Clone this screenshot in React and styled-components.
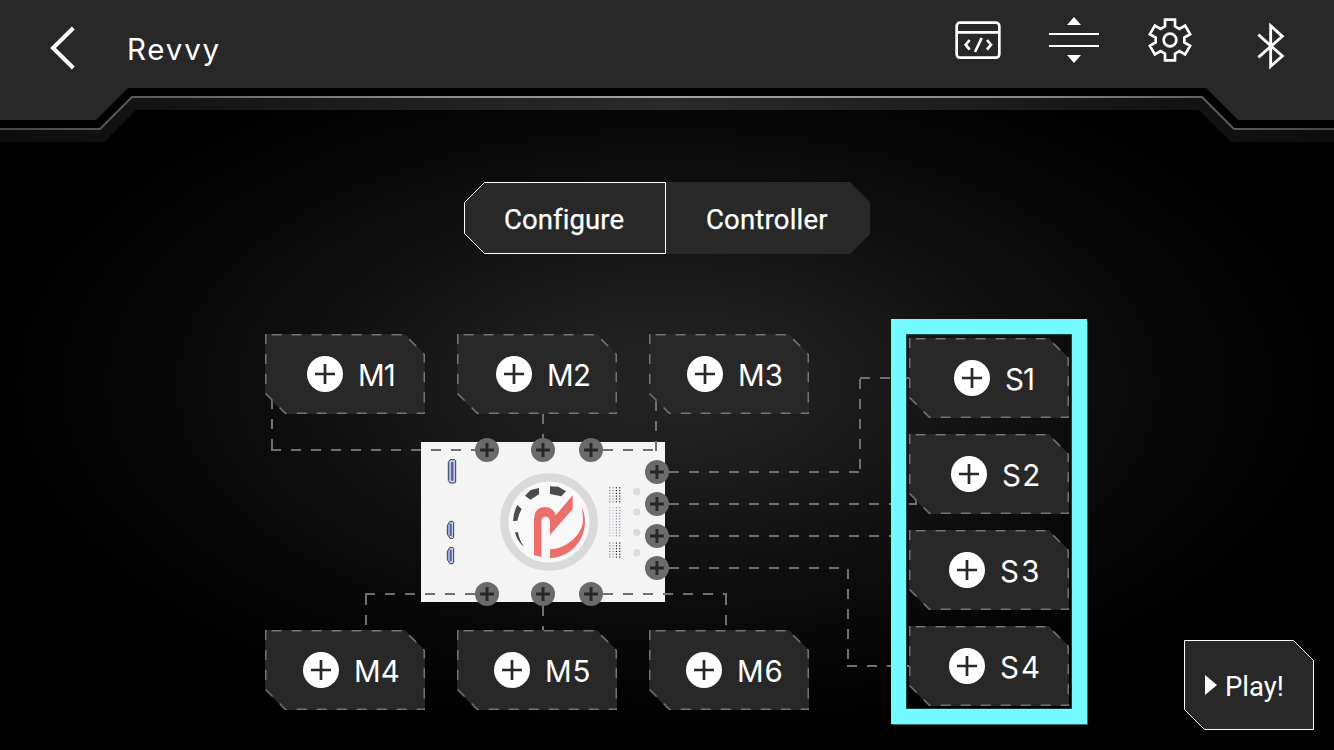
import React from "react";
import styled, { createGlobalStyle } from "styled-components";

const GlobalStyle = createGlobalStyle`
  * { box-sizing: border-box; }
  body { margin: 0; background: #000; }
`;

const Page = styled.div`
  display: flex;
  flex-direction: column;
  width: 1334px;
  height: 750px;
  overflow: hidden;
  color: #fff;
  font-family: Roboto, "Liberation Sans", sans-serif;
  background: radial-gradient(ellipse 680px 355px at 667px 385px, #252525 0%, #1e1e1e 20%, #101010 52%, #060606 78%, #000 100%);
`;

const Header = styled.header`
  position: relative;
  flex: none;
  display: flex;
  align-items: flex-start;
  height: 142px;
`;

const HeaderShape = styled.svg`
  position: absolute;
  inset: 0;
`;

const BackButton = styled.button`
  position: relative;
  width: 127px;
  height: 96px;
  padding: 0;
  border: 0;
  background: none;
`;

const Title = styled.h1`
  position: relative;
  margin: 0;
  font: 400 29.5px/98px Inter, sans-serif;
  letter-spacing: 1.8px;
`;

const Tools = styled.nav`
  position: relative;
  display: flex;
  margin-left: auto;
  padding-right: 20px;
`;

const ToolIcon = styled.svg`
  display: block;
  width: 96px;
  height: 88px;
  fill: none;
  stroke: #fff;
  stroke-width: 8;
`;

const Tabs = styled.div`
  flex: none;
  display: flex;
  align-self: center;
  width: 406px;
  height: 72px;
  margin-top: 40px;
`;

const Tab = styled.button`
  position: relative;
  width: ${(p) => p.$width}px;
  padding: 0 0 0 ${(p) => p.$inset}px;
  border: 0;
  background: none;
  color: #fff;
  text-align: left;
  font: 400 27.5px/76px Roboto, sans-serif;
  letter-spacing: ${(p) => p.$spacing}px;
  -webkit-text-stroke: 0.25px #fff;
`;

const Outline = styled.svg`
  position: absolute;
  inset: 0;
  fill: #282828;
`;

const Front = styled.span`
  position: relative;
`;

const Workspace = styled.main`
  position: relative;
  flex: 1;
  display: flex;
  align-items: flex-start;
  padding: 80px 20px 20px 265px;
`;

const Motors = styled.section`
  display: flex;
  flex-direction: column;
  gap: 28px;
  width: 544px;
`;

const MotorRow = styled.div`
  display: flex;
  gap: 32px;
`;

const Sensors = styled.section`
  position: relative;
  display: flex;
  flex-direction: column;
  gap: 16px;
  margin: 4px 0 0 100px;
`;

const BoardArt = styled.svg`
  display: block;
  width: 244px;
  height: 160px;
  margin-left: 156px;
`;

const Wires = styled.svg`
  position: absolute;
  inset: 0;
  z-index: 1;
`;

const Slot = styled.button`
  position: relative;
  z-index: 2;
  display: flex;
  align-items: center;
  justify-content: center;
  gap: 16px;
  width: 160px;
  height: 80px;
  padding: 0 0 0 12px;
  border: 0;
  background: none;
  color: #fff;
`;

const SlotOutline = styled(Outline)`
  clip-path: polygon(0 0, 140px 0, 160px 20px, 160px 80px, 20px 80px, 0 60px);
  stroke: #747474;
  stroke-width: 3;
  stroke-dasharray: 10 10;
`;

const PlusIcon = styled.svg`
  position: relative;
  flex: none;
  width: 36px;
  height: 36px;
`;

const SlotLabel = styled.span`
  position: relative;
  left: -1px;
  width: ${(p) => p.$width}px;
  padding-top: 1px;
  white-space: nowrap;
  text-align: left;
  font: 400 29.5px/36px Inter, sans-serif;
  letter-spacing: ${(p) => p.$spacing}px;
`;

const FocusFrame = styled.div`
  position: absolute;
  z-index: 3;
  top: -19px;
  left: -18px;
  width: 196px;
  height: 405px;
  border: 15px solid #74fbff;
  box-shadow: 0 0 1px 0.5px #2d7375, inset 0 0 1px 0.5px #2d7375;
  pointer-events: none;
`;

const PlayButton = styled.button`
  position: relative;
  display: flex;
  align-items: center;
  align-self: flex-end;
  gap: 8px;
  width: 130px;
  height: 90px;
  margin-left: auto;
  padding: 3px 0 0 21px;
  border: 0;
  background: none;
  color: #fff;
  font: 400 27.5px/36px Roboto, sans-serif;
`;

const PlayMark = styled.svg`
  position: relative;
  top: -2px;
  width: 12px;
  height: 20px;
`;

const gearPoints = Array.from({ length: 6 }, (_, k) => {
  const a = ((k * 60 - 90) * Math.PI) / 180;
  return [[41, -15], [61, -15], [61, 15], [41, 15]]
    .map(([r, s]) => `${720 + r * Math.cos(a) - s * Math.sin(a)},${120 + r * Math.sin(a) + s * Math.cos(a)}`)
    .join(" ");
}).join(" ");

const pins = [
  [487, 450], [543, 450], [591, 450],
  [657, 472], [657, 504], [657, 536], [657, 568],
  [487, 594], [543, 594], [591, 594],
];

const wirePath = [
  "M272 399V451M271 450H487",
  "M543 414V450",
  "M656 401V451M603 450H656",
  "M366 595V630M365 594H475",
  "M543 606V630",
  "M603 594H727M726 595V630",
  "M669 472H861M860 379V472M860 378H910",
  "M669 504H917M916 504V498",
  "M669 536H900",
  "M669 568H849M848 569V667M847 666H910",
].join("");

const dotBlocks = [
  { y: 173, rows: 6, color: "#000" },
  { y: 233, rows: 11, color: "#7c7ca8" },
  { y: 339, rows: 6, color: "#000" },
];

function PortSlot({ name, width, spacing = 0 }) {
  return (
    <Slot>
      <SlotOutline width="160" height="80">
        <path d="M0 0V60L20 80H160V20L140 0Z" />
      </SlotOutline>
      <PlusIcon viewBox="0 0 36 36">
        <circle cx="18" cy="18" r="18" fill="#fff" />
        <path d="M8 18H28M18 8V28" stroke="#282828" strokeWidth="2.7" />
      </PlusIcon>
      <SlotLabel $width={width} $spacing={spacing}>{name}</SlotLabel>
    </Slot>
  );
}

function Connector({ x, y, w, h, cut = 5 }) {
  const r = x + w;
  const b = y + h;
  return (
    <g>
      <path
        d={`M${x + cut} ${y}H${r - 3}L${r} ${y + 3}V${b - 3}L${r - 3} ${b}H${x + cut}L${x} ${b - cut * 1.5}V${y + cut * 1.5}Z`}
        fill="#c3cee9"
        stroke="#262d45"
        strokeWidth="2.8"
      />
      <rect x={x + w * 0.36} y={y + 7} width={w * 0.34} height={h - 14} fill="#56649a" />
      <path d={`M${x + 4} ${y + 10}V${b - 10}`} stroke="#8794bf" strokeWidth="2" />
    </g>
  );
}

function Board() {
  return (
    <BoardArt viewBox="0 0 244 160">
      <rect width="244" height="160" fill="#f4f4f4" />
      <g transform="translate(-11 -12) scale(.33333)">
        <Connector x={115} y={89} w={22} h={70} />
        <Connector x={112} y={274} w={19} h={51} cut={8} />
        <Connector x={112} y={352} w={19} h={49} cut={8} />
      </g>
      <g transform="translate(69 -12) scale(.33333)">
        <circle cx="177" cy="276" r="134" fill="#f8f8f8" stroke="#dadada" strokeWidth="25" />
        <g fill="#4b4b4b">
          <path d="M105 197L122 180L147 174V193L121 209Z" />
          <path d="M180 169L205 170L228 184L214 199L180 192Z" />
          <path d="M82 225L95 237Q86 252 82 272L69 273Q70 247 82 225Z" />
          <path d="M75 307L84 307Q87 329 102 351Q80 332 75 307Z" />
        </g>
        <g fill="#ed6f6b">
          <path d="M132 375V268Q133 231 166 231Q190 232 197 256L248 196V237L180 315V275Q178 260 167 260Q155 260 154 275V381Z" />
          <path d="M275 231A108 108 0 0 1 180 384V358C235 356 279 308 279 270Q279 250 275 231Z" />
        </g>
        {dotBlocks.map((b) =>
          Array.from({ length: b.rows * 4 }, (_, i) => (
            <rect
              key={`${b.y}-${i}`}
              x={357.5 + (i % 4) * 10}
              y={b.y - 1.5 + Math.floor(i / 4) * 8.4}
              width="3.4"
              height="3.4"
              fill={b.color}
              opacity={[0.55, 0.45, 0.95, 1][i % 4]}
            />
          ))
        )}
        {[185, 246, 307, 368].map((y) => (
          <circle key={y} cx="440" cy={y} r="11" fill="#dcdcdc" />
        ))}
      </g>
    </BoardArt>
  );
}

export default function App() {
  return (
    <Page>
      <GlobalStyle />
      <Header>
        <HeaderShape width="1334" height="142">
          <defs>
            <linearGradient id="rim" gradientUnits="userSpaceOnUse" x1="0" x2="1334" y1="0" y2="0">
              <stop offset="0" stopColor="#444" />
              <stop offset=".22" stopColor="#777" />
              <stop offset=".5" stopColor="#a4a4a4" />
              <stop offset=".78" stopColor="#858585" />
              <stop offset="1" stopColor="#444" />
            </linearGradient>
            <linearGradient id="band" gradientUnits="userSpaceOnUse" x1="0" x2="1334" y1="0" y2="0">
              <stop offset="0" stopColor="#0c0c0c" />
              <stop offset=".22" stopColor="#1a1a1a" />
              <stop offset=".5" stopColor="#2a2a2a" />
              <stop offset=".78" stopColor="#1a1a1a" />
              <stop offset="1" stopColor="#0c0c0c" />
            </linearGradient>
          </defs>
          <path d="M0 0H1334V129H1234L1202 97H132L100 129H0Z" fill="#000" />
          <path d="M0 129H100L132 97H1202L1234 129H1334V142H1231L1199 110H136L104 142H0Z" fill="url(#band)" />
          <path d="M0 129H100L132 97H1202L1234 129H1334" fill="none" stroke="url(#rim)" strokeWidth="1.8" />
          <path d="M0 0H1334V120H1238L1206 88H128L96 120H0Z" fill="#282828" />
        </HeaderShape>
        <BackButton aria-label="Back">
          <svg width="127" height="96" viewBox="0 0 381 288">
            <path d="M220 84L159 144L220 204" fill="none" stroke="#fff" strokeWidth="12" />
          </svg>
        </BackButton>
        <Title>Revvy</Title>
        <Tools>
          <ToolIcon viewBox="0 0 288 264">
            <rect x="80" y="68" width="128" height="105" rx="10" />
            <path d="M80 97H208M119 120L107 134L119 149M171 120L183 134L171 149M155 114L135 156" />
          </ToolIcon>
          <ToolIcon viewBox="288 0 288 264">
            <path d="M357 102H507M357 138H507" strokeWidth="6" />
            <path d="M432 51L453 75H411ZM411 165H453L432 189Z" fill="#fff" stroke="none" />
          </ToolIcon>
          <ToolIcon viewBox="576 0 288 264">
            <polygon points={gearPoints} />
            <circle cx="720" cy="120" r="19" />
          </ToolIcon>
          <ToolIcon viewBox="864 0 288 264">
            <path d="M985 104L1057 168L1022 199V77L1057 109L985 172" strokeWidth="8.5" />
          </ToolIcon>
        </Tools>
      </Header>

      <Tabs>
        <Tab $width={202} $inset={40} $spacing={0.1}>
          <Outline width="202" height="72">
            <path d="M20.5 .5H201.5V71.5H20.5L.5 51.5V20.5Z" stroke="#fff" />
          </Outline>
          <Front>Configure</Front>
        </Tab>
        <Tab $width={204} $inset={40} $spacing={0.2}>
          <Outline width="204" height="72">
            <path d="M0 0H184L204 20V52L184 72H0Z" />
          </Outline>
          <Front>Controller</Front>
        </Tab>
      </Tabs>

      <Workspace>
        <Motors>
          <MotorRow>
            <PortSlot name="M1" width={36} spacing={-1} />
            <PortSlot name="M2" width={42} spacing={-0.6} />
            <PortSlot name="M3" width={44} />
          </MotorRow>
          <Board />
          <MotorRow>
            <PortSlot name="M4" width={44} />
            <PortSlot name="M5" width={46} spacing={0.8} />
            <PortSlot name="M6" width={46} spacing={0.8} />
          </MotorRow>
        </Motors>
        <Wires width="1334" height="496" viewBox="0 254 1334 496">
          <path d={wirePath} fill="none" stroke="#707070" strokeWidth="2" strokeDasharray="10 10" />
          {pins.map(([x, y]) => (
            <g key={`${x}-${y}`}>
              <circle cx={x} cy={y} r="12" fill="#6b6b6b" />
              <path d={`M${x - 7} ${y}h14M${x} ${y - 7}v14`} stroke="#282828" strokeWidth="3" />
            </g>
          ))}
        </Wires>
        <Sensors>
          <PortSlot name="S1" width={30} spacing={-1} />
          <PortSlot name="S2" width={36} spacing={1.2} />
          <PortSlot name="S3" width={40} spacing={2.4} />
          <PortSlot name="S4" width={40} spacing={2} />
          <FocusFrame />
        </Sensors>
        <PlayButton>
          <Outline width="130" height="90">
            <path d="M.5 .5H109.5L129.5 20.5V89.5H20.5L.5 69.5Z" stroke="#fff" />
          </Outline>
          <PlayMark viewBox="0 0 12 20"><path d="M0 0L12 10L0 20Z" fill="#fff" /></PlayMark>
          <Front>Play!</Front>
        </PlayButton>
      </Workspace>
    </Page>
  );
}
